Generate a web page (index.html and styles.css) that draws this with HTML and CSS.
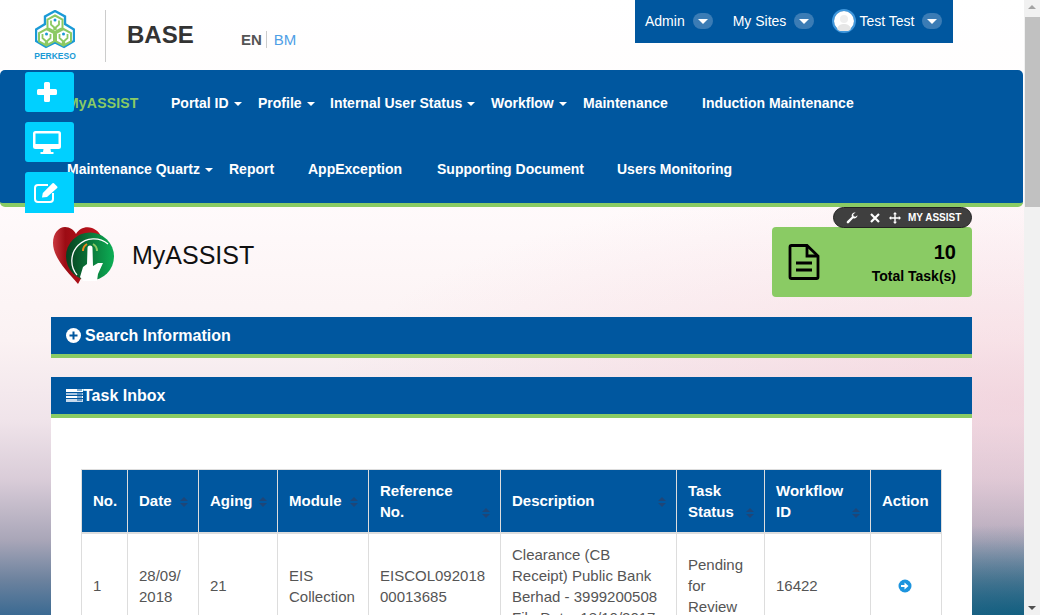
FILE: index.html
```html
<!DOCTYPE html>
<html>
<head>
    <title>MyASSIST</title>
    <meta name="viewport" content="width=device-width, initial-scale=1">
    <link rel="stylesheet" href="styles.css">
</head>
<body>
<div class="window">
    <div class="page">
        <div class="side-buttons">
            <a class="side-btn">
                <svg width="22" height="22" viewBox="0 0 22 22"><path d="M8 2.500a1.500 1.500 0 0 1 1.500-1.500h3a1.500 1.500 0 0 1 1.500 1.500V8h5.500a1.500 1.500 0 0 1 1.500 1.500v3a1.500 1.500 0 0 1-1.500 1.500H14v5.500a1.500 1.500 0 0 1-1.500 1.500h-3A1.500 1.500 0 0 1 8 19.500V14H2.500A1.500 1.500 0 0 1 1 12.500v-3A1.500 1.500 0 0 1 2.500 8H8z" fill="#fff"/></svg>
            </a>
            <a class="side-btn">
                <svg width="28" height="23" viewBox="0 0 28 23"><path fill-rule="evenodd" d="M2.500 0h23A2.500 2.500 0 0 1 28 2.500v13a2.500 2.500 0 0 1-2.500 2.500h-23A2.500 2.500 0 0 1 0 15.500v-13A2.500 2.500 0 0 1 2.500 0zM2.500 2.500v10.500h23V2.500z" fill="#fff"/><path d="M10.500 18h7l.5 3h2.500v2h-13v-2H10z" fill="#fff"/></svg>
            </a>
            <a class="side-btn last">
                <svg width="26" height="21" viewBox="0 0 26 21"><path d="M19 11v6a3 3 0 0 1-3 3H4a3 3 0 0 1-3-3V6a3 3 0 0 1 3-3h10" fill="none" stroke="#fff" stroke-width="2"/><path d="M8 15.500l.8-4.500L18.500 1.300a1 1 0 0 1 1.400 0l3.300 3.300a1 1 0 0 1 0 1.400L13 15z" fill="#fff"/></svg>
            </a>
        </div>

        <header class="top">
            <div class="logo-block">
                <svg width="40" height="40" viewBox="0 0 40 40">
                    <path d="M20 1l10 5.500V14l9 5.500V31l-10 6-9-4.500L11 37 1 31V19.500L10 14V6.500z" fill="#fff" stroke="#1b9ad6" stroke-width="2.400"/>
                    <path d="M20 5.500l7.500 4V18L20 22l-7.500-4V9.500zM11.500 19l7.500 4v8.500L11.500 35.500 4 31.500V23zM28.500 19l7.500 4v8.500l-7.500 4-7.500-4V23z" fill="#fff" stroke="#8cc963" stroke-width="2"/>
                    <path d="M16 10.500v4l3.200 3V20M24 10.500v4l-3.200 3V20M7.500 24v4l3.200 3v3M15.500 24v4l-3.200 3v3M24.500 24v4l3.200 3v3M32.500 24v4l-3.200 3v3" fill="none" stroke="#8cc963" stroke-width="1.800"/>
                    <circle cx="20" cy="10" r="1.500" fill="#1b9ad6"/>
                    <circle cx="11.500" cy="24" r="1.500" fill="#1b9ad6"/>
                    <circle cx="28.500" cy="24" r="1.500" fill="#1b9ad6"/>
                </svg>
                <span class="perkeso-name">PERKESO</span>
            </div>
            <div class="divider"></div>
            <div class="brand">BASE</div>
            <div class="lang"><b>EN</b><span>BM</span></div>
            <div class="usermenu">
                <span>Admin</span><i class="pill"></i>
                <span class="gap">My Sites</span><i class="pill"></i>
                <span class="avatar">
                    <svg width="20" height="20" viewBox="0 0 20 20"><circle cx="10" cy="10" r="10" fill="#fff"/><circle cx="10" cy="8" r="4" fill="#eee"/><path d="M3 18c1-4 4-5 7-5s6 1 7 5a10 10 0 0 1-14 0z" fill="#e6e6e6"/></svg>
                </span>
                <span>Test Test</span><i class="pill"></i>
            </div>
        </header>

        <nav class="nav">
            <div class="nav-row">
                <a class="active w-myassist">MyASSIST</a>
                <a class="caret w-portal">Portal ID</a>
                <a class="caret w-profile">Profile</a>
                <a class="caret w-status">Internal User Status</a>
                <a class="caret w-workflow">Workflow</a>
                <a class="w-maint">Maintenance</a>
                <a>Induction Maintenance</a>
            </div>
            <div class="nav-row">
                <a class="caret w-quartz">Maintenance Quartz</a>
                <a class="w-report">Report</a>
                <a class="w-app">AppException</a>
                <a class="w-doc">Supporting Document</a>
                <a>Users Monitoring</a>
            </div>
        </nav>

        <main class="content">
            <div class="toolbar">
                <svg class="tool-wrench" width="12" height="12" viewBox="0 0 12 12"><path d="M11.500 3.200a3.200 3.200 0 0 1-4.300 3L2.800 11a1.200 1.200 0 0 1-1.800-1.700l4.800-4.500a3.200 3.200 0 0 1 3.900-4.200L7.200 2.200l.4 2 2 .5z" fill="#fff"/></svg>
                <svg class="tool-close" width="10" height="10" viewBox="0 0 10 10"><path d="M1 1l8 8M9 1l-8 8" stroke="#fff" stroke-width="2.200"/></svg>
                <svg class="tool-move" width="12" height="12" viewBox="0 0 12 12"><path d="M6 0l2 2.200H6.700v3.100h3.100V4L12 6 9.800 8V6.700H6.700v3.100H8L6 12 4 9.800h1.300V6.700H2.200V8L0 6l2.200-2v1.300h3.100V2.200H4z" fill="#fff"/></svg>
                <span>MY ASSIST</span>
            </div>

            <div class="title-row">
                <svg class="assist-logo" width="64" height="60" viewBox="0 0 64 60">
                    <defs>
                        <linearGradient id="heart" x1="0" x2="1"><stop offset="0" stop-color="#c9383f"/><stop offset=".25" stop-color="#9c0c14"/><stop offset="1" stop-color="#c3141d"/></linearGradient>
                        <linearGradient id="disc" x1="0" x2="1"><stop offset="0" stop-color="#08401f"/><stop offset="1" stop-color="#0cae55"/></linearGradient>
                    </defs>
                    <path d="M26 58C16 46 1 32 1 17 1 7 7 1 13 1c5 0 9 3 11 7 3-5 9-8 16-6 6 2 10 8 10 12z" fill="url(#heart)"/>
                    <circle cx="38" cy="30.500" r="24" fill="url(#disc)"/>
                    <path d="M25 49A22 22 0 0 1 56 18" fill="none" stroke="#fff" stroke-width="1.300"/>
                    <path d="M35.500 22a2.500 2.500 0 0 1 5 0L41 40l5-3 5 0-5 11-1 7-14 0-3-4 3-10 4-3z" fill="#fff"/>
                    <path d="M31 25a8 8 0 0 1 4-7" fill="none" stroke="#ee8a1d" stroke-width="2"/>
                    <path d="M41 18a8 8 0 0 1 4 7" fill="none" stroke="#8cc963" stroke-width="2"/>
                </svg>
                <h1>MyASSIST</h1>
                <div class="stat">
                    <svg width="32" height="36" viewBox="0 0 32 36"><path d="M2 3a1.500 1.500 0 0 1 1.500-1.500H19L30 12v21a1.500 1.500 0 0 1-1.500 1.500h-25A1.500 1.500 0 0 1 2 33z" fill="none" stroke="#000" stroke-width="2.800"/><path d="M19 2v10h11" fill="none" stroke="#000" stroke-width="2.800"/><path d="M8 19h16M8 26h16" stroke="#000" stroke-width="2.800"/></svg>
                    <div class="stat-text">
                        <div class="stat-num">10</div>
                        <div class="stat-label">Total Task(s)</div>
                    </div>
                </div>
            </div>

            <div class="panel-head search-head">
                <svg width="15" height="15" viewBox="0 0 15 15"><circle cx="7.500" cy="7.500" r="7.500" fill="#fff"/><path d="M7.500 3.500v8M3.500 7.500h8" stroke="#00579f" stroke-width="2"/></svg>
                Search Information
            </div>

            <div class="panel-head inbox-head">
                <svg width="17" height="13" viewBox="0 0 17 13"><path d="M0 0h17v3H0z" fill="#fff"/><path d="M0 4h17v2H0z" fill="#a9c6e2"/><path d="M0 7h17v2H0z" fill="#fff"/><path d="M0 10h17v3H0z" fill="#c6d9ec"/><path d="M11 1h5M11 5h5M11 8h5M11 11h5" stroke="#00579f"/></svg>Task Inbox
            </div>

            <div class="panel-body">
                <table class="tasks">
                    <colgroup>
                        <col class="c1"><col class="c2"><col class="c3"><col class="c4"><col class="c5"><col class="c6"><col class="c7"><col class="c8"><col class="c9">
                    </colgroup>
                    <thead>
                        <tr>
                            <th>No.</th>
                            <th class="sort">Date</th>
                            <th class="sort">Aging</th>
                            <th class="sort">Module</th>
                            <th class="sort two">Reference No.</th>
                            <th class="sort">Description</th>
                            <th class="sort two">Task Status</th>
                            <th class="sort two">Workflow ID</th>
                            <th>Action</th>
                        </tr>
                    </thead>
                    <tbody>
                        <tr>
                            <td class="odd">1</td>
                            <td>28/09/<br>2018</td>
                            <td class="odd">21</td>
                            <td>EIS Collection</td>
                            <td>EISCOL092018<br>00013685</td>
                            <td>Clearance (CB Receipt) Public Bank Berhad - 3999200508 File Date: 18/10/2017</td>
                            <td class="odd">Pending for Review</td>
                            <td class="odd">16422</td>
                            <td class="action">
                                <svg width="14" height="14" viewBox="0 0 14 14"><circle cx="7" cy="7" r="6.500" fill="#1c94de"/><path d="M3 6h3.500V3.500L10.500 7l-4 3.500V8H3z" fill="#fff"/></svg>
                            </td>
                        </tr>
                    </tbody>
                </table>
            </div>
        </main>
    </div>

    <div class="scrollbar">
        <div class="arrow up"></div>
        <div class="thumb"></div>
        <div class="arrow down"></div>
    </div>
</div>
</body>
</html>
```

FILE: styles.css
```css
html, body {
    margin: 0;
    padding: 0;
    height: 100%;
    overflow: hidden;
}
body {
    font-family: "Liberation Sans", Arial, sans-serif;
    font-size: 14px;
    color: #555;
}
.window {
    display: flex;
    width: 1040px;
    height: 615px;
    overflow: hidden;
}
.page {
    position: relative;
    width: 1024px;
    height: 615px;
    overflow: hidden;
    background:
        radial-gradient(ellipse 420px 90px at 100% 100%, rgba(0, 90, 120, .7), rgba(0, 90, 120, 0)),
        radial-gradient(ellipse 700px 230px at 100% 400px, rgba(240, 190, 205, .42), rgba(240, 190, 205, 0)),
        linear-gradient(180deg, #fff 0, #fffafb 205px, #fbf2f3 340px, #f0e4ea 420px, #d9ccd8 480px, #a9a6b8 540px, #6c829e 580px, #3b6a92 615px);
}

/* header */
.top {
    position: relative;
    display: flex;
    align-items: flex-start;
    height: 70px;
    box-sizing: border-box;
    padding: 10px 0 0 35px;
}
.logo-block {
    display: flex;
    flex-direction: column;
    align-items: center;
    width: 40px;
}
.logo-block svg {
    display: block;
}
.perkeso-name {
    margin-top: 2px;
    color: #1b9ad6;
    font-size: 8.5px;
    line-height: 9px;
    font-weight: bold;
}
.divider {
    width: 1px;
    height: 52px;
    margin: 0 21px 0 30px;
    background: #ccc;
}
.brand {
    width: 114px;
    color: #333;
    font-size: 24px;
    line-height: 30px;
    margin-top: 10px;
    font-weight: bold;
}
.lang {
    display: flex;
    align-items: center;
    margin-top: 21px;
    font-size: 15px;
    line-height: 17px;
}
.lang b {
    color: #555;
    padding-right: 4px;
    border-right: 1px solid #ccc;
}
.lang span {
    color: #4f9fe6;
    padding-left: 7px;
}
.usermenu {
    position: absolute;
    left: 635px;
    top: 0;
    display: flex;
    align-items: center;
    width: 318px;
    height: 43px;
    box-sizing: border-box;
    padding: 0 0 2px 10px;
    background: #00579f;
    color: #fff;
}
.pill {
    position: relative;
    width: 20px;
    height: 16px;
    margin-left: 8px;
    border-radius: 8px;
    background: #3b7cb5;
}
.pill::after {
    content: "";
    position: absolute;
    left: 5px;
    top: 6px;
    border: 5px solid transparent;
    border-top-color: #fff;
    border-bottom: 0;
}
.gap {
    margin-left: 20px;
}
.avatar {
    display: flex;
    margin: 0 3px 0 18px;
    border: 2px solid #3f97dc;
    border-radius: 50%;
}

/* nav */
.nav {
    background: #00579f;
    border-bottom: 4px solid #8acb64;
    border-radius: 5px;
    margin-right: 1px;
    padding-left: 67px;
    height: 133px;
}
.nav-row {
    display: flex;
    align-items: center;
    height: 66px;
}
.nav a {
    color: #fff;
    font-weight: bold;
    white-space: nowrap;
}
.nav a.active {
    color: #8acb64;
    letter-spacing: .2px;
}
.caret::after {
    content: "";
    display: inline-block;
    margin-left: 5px;
    vertical-align: 2px;
    border: 4px solid transparent;
    border-top-color: #fff;
    border-bottom: 0;
}
.w-myassist { width: 104px; }
.w-portal { width: 87px; }
.w-profile { width: 72px; }
.w-status { width: 161px; }
.w-workflow { width: 92px; }
.w-maint { width: 119px; }
.w-quartz { width: 162px; }
.w-report { width: 79px; }
.w-app { width: 129px; }
.w-doc { width: 180px; }

.side-buttons {
    position: absolute;
    left: 25px;
    top: 72px;
    z-index: 5;
    display: flex;
    flex-direction: column;
    gap: 10px;
}
.side-btn {
    display: flex;
    align-items: center;
    justify-content: center;
    width: 49px;
    height: 40px;
    box-sizing: border-box;
    padding-right: 6px;
    background: #00d0ff;
    border-radius: 3px;
}
.side-btn.last {
    height: 41px;
    border-radius: 3px 3px 0 0;
}

/* content */
.content {
    position: relative;
    padding: 0 52px 0 51px;
}
.toolbar {
    position: absolute;
    right: 52px;
    top: 0;
    z-index: 2;
    display: flex;
    align-items: center;
    width: 139px;
    height: 21px;
    box-sizing: border-box;
    padding-left: 12px;
    background: #3f3f3f;
    border: 1px solid #222;
    border-radius: 11px;
    color: #fff;
    font-size: 10px;
    font-weight: bold;
}
.tool-close {
    margin: 0 9px 0 12px;
}
.tool-move {
    margin-right: 7px;
}
.title-row {
    display: flex;
    align-items: center;
    height: 110px;
}
.assist-logo {
    margin: -12px 16px 0 1px;
}
.title-row h1 {
    flex: 1;
    margin: -13px 0 0;
    font-size: 25px;
    font-weight: normal;
    color: #111;
}
.stat {
    display: flex;
    align-items: center;
    justify-content: space-between;
    width: 200px;
    height: 70px;
    box-sizing: border-box;
    padding: 0 16px;
    background: #8acb64;
    border-radius: 4px;
    color: #000;
}
.stat-text {
    text-align: right;
}
.stat-num {
    font-size: 20px;
    font-weight: bold;
    margin-bottom: 4px;
}
.stat-label {
    font-size: 14px;
    font-weight: bold;
}
.panel-head {
    display: flex;
    align-items: center;
    height: 37px;
    padding-left: 15px;
    background: #00579f;
    border-bottom: 4px solid #8acb64;
    color: #fff;
    font-size: 16px;
    font-weight: bold;
}
.search-head {
    gap: 4px;
    margin-bottom: 19px;
}
.panel-body {
    background: #fff;
    padding: 51px 30px 0;
    height: 300px;
}
.tasks {
    width: 861px;
    table-layout: fixed;
    border-collapse: collapse;
    font-size: 15px;
}
.c1 { width: 46px; }
.c2 { width: 71px; }
.c3 { width: 79px; }
.c4 { width: 91px; }
.c5 { width: 132px; }
.c6 { width: 176px; }
.c7 { width: 88px; }
.c8 { width: 106px; }
.c9 { width: 71px; }
.tasks th, .tasks td {
    border: 1px solid #ddd;
    padding: 10px 10px 10px 11px;
    line-height: 21px;
    text-align: left;
}
.tasks th {
    position: relative;
    background: #00579f;
    color: #fff;
    font-weight: bold;
    border-bottom-width: 2px;
    padding-bottom: 11px;
}
.tasks th.two {
    padding-bottom: 10px;
}
.tasks th.sort {
    padding-right: 24px;
}
.tasks th.sort::before,
.tasks th.sort::after {
    content: "";
    position: absolute;
    right: 10px;
    border: 4px solid transparent;
}
.tasks th.sort::before {
    top: 27px;
    border-top: 0;
    border-bottom-color: #1e4678;
}
.tasks th.sort::after {
    top: 33px;
    border-bottom: 0;
    border-top-color: #1e4678;
}
.tasks th.two::before {
    top: 38px;
}
.tasks th.two::after {
    top: 44px;
}
.tasks td.odd {
    padding-bottom: 11px;
}
.tasks td.action {
    text-align: center;
    padding-right: 14px;
    padding-top: 12px;
}

/* scrollbar */
.scrollbar {
    position: relative;
    width: 16px;
    height: 615px;
    background: #f1f1f1;
}
.thumb {
    position: absolute;
    left: 1px;
    top: 17px;
    width: 15px;
    height: 190px;
    background: #c1c1c1;
}
.arrow {
    position: absolute;
    left: 4px;
    border: 4px solid transparent;
}
.up {
    top: 5px;
    border-top: 0;
    border-bottom-color: #a3a3a3;
}
.down {
    bottom: 5px;
    border-bottom: 0;
    border-top-color: #505050;
}
```
